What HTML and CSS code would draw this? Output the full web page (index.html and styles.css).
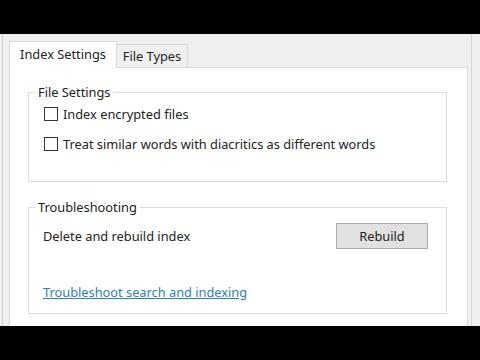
FILE: index.html
```html
<!DOCTYPE html>
<html lang="en">
<head>
    <meta charset="UTF-8">
    <meta name="viewport" content="width=device-width, initial-scale=1.0">
    <title>Advanced Options</title>
    <link rel="stylesheet" href="styles.css">
</head>
<body>
    <div class="letterbox"></div>

    <div class="screen">
        <div class="frame">
            <!-- Tab strip -->
            <div class="tabs">
                <div class="tab active">Index Settings</div>
                <div class="tab">File Types</div>
            </div>

            <div class="panel">
                <fieldset class="group group-files">
                    <legend>File Settings</legend>
                    <div class="group-body">
                        <label class="check-row"><span class="check"></span>Index encrypted files</label>
                        <label class="check-row"><span class="check"></span>Treat similar words with diacritics as different words</label>
                    </div>
                </fieldset>

                <fieldset class="group group-trouble">
                    <legend>Troubleshooting</legend>
                    <div class="group-body">
                        <div class="action-row">
                            <span>Delete and rebuild index</span>
                            <button class="btn">Rebuild</button>
                        </div>
                        <a class="link" href="#">Troubleshoot search and indexing</a>
                    </div>
                </fieldset>
            </div>
        </div>
    </div>

    <div class="letterbox"></div>
</body>
</html>
```

FILE: styles.css
```css
* {
    box-sizing: border-box;
}

body {
    margin: 0;
    background: #000;
    font-family: "Noto Sans", "Open Sans", sans-serif;
    font-size: 12.8px;
    color: #222;
}

.letterbox {
    height: 34px;
    background: #000;
}

.screen {
    height: 292px;
    background: #f0f0f0;
    overflow: hidden;
}

.frame {
    width: 470px;
    height: 100%;
    margin-left: 2px;
    border-left: 1px solid #d2d2d2;
    border-right: 1px solid #d6d6d6;
    padding: 7px 3px 0 6px;
}

/* Tabs */
.tabs {
    display: flex;
    align-items: flex-end;
    height: 26px;
}

.tab {
    width: 72px;
    height: 23px;
    margin-left: -1px;
    border: 1px solid #d9d9d9;
    border-bottom: none;
    background: #f0f0f0;
    text-align: center;
    line-height: 22px;
}

.tab.active {
    position: relative;
    z-index: 1;
    width: 108px;
    height: 27px;
    margin-left: 0;
    margin-bottom: -1px;
    background: #fff;
    line-height: 24px;
}

/* Tab page */
.panel {
    height: 270px;
    background: #fff;
    border: 1px solid #d9d9d9;
    padding-top: 16px;
}

.group {
    margin: 0 20px 0 18px;
    padding: 0;
    border: 1px solid #dcdcdc;
}

.group legend {
    margin-left: 6px;
    padding: 0 3px;
    line-height: 16px;
}

.group-trouble {
    margin-top: 17px;
}

.group-files .group-body {
    display: flex;
    flex-direction: column;
    gap: 10px;
    padding: 4px 0 27px 15px;
}

.check-row {
    display: flex;
    align-items: center;
    gap: 5px;
    height: 20px;
}

.check {
    width: 14px;
    height: 14px;
    border: 1px solid #333;
    background: #fff;
}

.group-trouble .group-body {
    padding: 8px 18px 11px 14px;
}

.action-row {
    display: flex;
    align-items: center;
    justify-content: space-between;
    height: 26px;
}

.btn {
    width: 92px;
    height: 26px;
    border: 1px solid #adadad;
    background: #e1e1e1;
    font-family: inherit;
    font-size: inherit;
    color: #222;
    padding: 0;
}

.link {
    display: block;
    margin-top: 33px;
    line-height: 20px;
    color: #2f7fb2;
    text-decoration: underline;
}
```
